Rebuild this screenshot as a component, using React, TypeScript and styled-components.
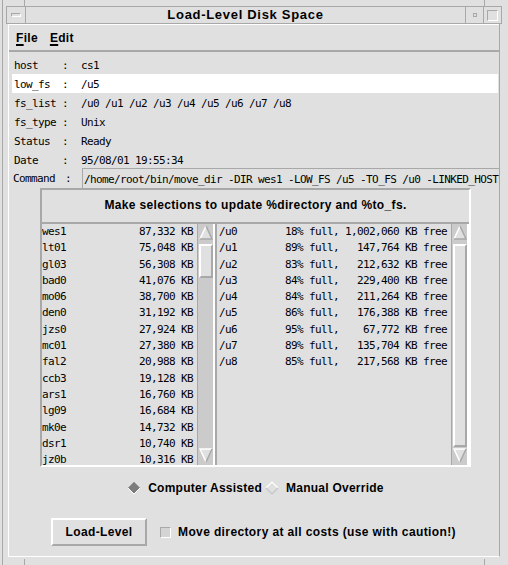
import React from 'react';
import styled, { createGlobalStyle } from 'styled-components';

const BG = '#e0e0e0';
const DARK = '#a8a8a8';
const LIGHT = '#ffffff';
const TROUGH = '#cbcbcb';
const TEXT = '#000000';
const MONO = `"DejaVu Sans Mono", monospace`;
const SANS = `"Liberation Sans", Arial, sans-serif`;

const Global = createGlobalStyle`
  html, body { margin: 0; padding: 0; background: ${BG}; }
  body { width: 508px; height: 565px; overflow: hidden; }
  * { box-sizing: border-box; }
`;

const Frame = styled.div`
  position: relative;
  width: 508px;
  height: 565px;
  background: ${BG};
  padding: 6px 6px 0 6px;
  display: flex;
  flex-direction: column;
`;

const OuterLine = styled.div<{ $side: 'left' | 'right' | 'bottom' }>`
  position: absolute;
  background: ${DARK};
  ${p => p.$side === 'left' && 'left: 2px; top: 0; bottom: 0; width: 1px;'}
  ${p => p.$side === 'right' && 'right: 2px; top: 0; bottom: 0; width: 1px;'}
  ${p => p.$side === 'bottom' && 'left: 0; right: 0; bottom: 3px; height: 1px;'}
`;

const Tick = styled.div<{ $x?: number; $y?: number; $v?: boolean; $bottom?: boolean }>`
  position: absolute;
  background: ${DARK};
  ${p => (p.$v ? 'width: 1px; height: 6px;' : 'height: 1px; width: 6px;')}
  ${p => (p.$x !== undefined ? `left: ${p.$x}px;` : '')}
  ${p => (p.$y !== undefined ? `top: ${p.$y}px;` : '')}
  ${p => (p.$bottom ? 'bottom: 0;' : '')}
`;

const TitleBar = styled.div`
  display: flex;
  height: 18px;
  border: 1px solid ${DARK};
`;

const TBBox = styled.div<{ $w: number }>`
  width: ${p => p.$w}px;
  flex: none;
  display: flex;
  align-items: center;
  justify-content: center;
  border-right: 1px solid ${DARK};
  &:last-child { border-right: none; }
`;

const MenuGlyph = styled.div`
  width: 10px;
  height: 4px;
  border: 1px solid ${DARK};
  border-bottom-color: ${LIGHT};
  border-right-color: ${LIGHT};
`;

const MinGlyph = styled.div`
  width: 4px;
  height: 4px;
  border: 1px solid ${DARK};
`;

const MaxGlyph = styled.div`
  width: 11px;
  height: 11px;
  border: 1px solid ${DARK};
  border-bottom-color: ${LIGHT};
  border-right-color: ${LIGHT};
`;

const TitleText = styled.div`
  flex: 1;
  text-align: center;
  font: bold 13px ${SANS};
  letter-spacing: 0.7px;
  color: ${TEXT};
  line-height: 16px;
  border-right: 1px solid ${DARK};
`;

const Client = styled.div`
  flex: 1;
  margin: 0 2px 9px 2px;
  border-left: 1px solid ${LIGHT};
  border-right: 1px solid ${DARK};
  border-bottom: 1px solid ${LIGHT};
  display: flex;
  flex-direction: column;
`;

const MenuBar = styled.div`
  height: 28px;
  display: flex;
  align-items: center;
  gap: 12px;
  padding-left: 7px;
  border-top: 1px solid ${LIGHT};
  border-bottom: 2px solid ${DARK};
`;

const MenuItem = styled.span`
  font: bold 12px ${SANS};
  letter-spacing: 0.3px;
  color: ${TEXT};
  padding-top: 1px;
  & u { text-decoration-thickness: 2px; text-underline-offset: 2px; }
`;

const Form = styled.div`
  display: flex;
  flex-direction: column;
  padding: 3px 0 0 3px;
`;

const FieldRow = styled.div<{ $hl?: boolean }>`
  display: flex;
  height: 19px;
  align-items: center;
  padding-top: 1px;
  background: ${p => (p.$hl ? LIGHT : 'transparent')};
  margin-right: 1px;
  font: 11px ${MONO};
  letter-spacing: -0.62px;
  color: ${TEXT};
  white-space: pre;
`;

const Label = styled.span`
  width: 50px;
  padding-left: 2px;
  flex: none;
`;

const Colon = styled.span`
  width: 19px;
  flex: none;
`;

const CommandRow = styled.div`
  display: flex;
  align-items: center;
  height: 20px;
  margin-top: -1px;
  padding-left: 4px;
  font: 11px ${MONO};
  letter-spacing: -0.62px;
  color: ${TEXT};
  white-space: pre;
`;

const CmdLabel = styled.span`
  width: 52px;
  flex: none;
`;

const CmdColon = styled.span`
  width: 17px;
  flex: none;
`;

const CmdField = styled.div`
  flex: 1;
  height: 20px;
  display: flex;
  align-items: center;
  padding: 1px 0 0 1px;
  overflow: hidden;
  border-left: 1px solid ${DARK};
  border-top: 1px solid ${DARK};
`;

const Panel = styled.div`
  margin: 0 0 0 31px;
  width: 431px;
  height: 279px;
  border-left: 2px solid ${DARK};
  border-top: 2px solid ${DARK};
  border-right: 2px solid ${LIGHT};
  border-bottom: 2px solid ${LIGHT};
  display: flex;
  flex-direction: column;
`;

const PanelHeader = styled.div`
  height: 32px;
  display: flex;
  align-items: center;
  justify-content: center;
  font: bold 12px ${SANS};
  letter-spacing: 0.35px;
  color: ${TEXT};
  padding-bottom: 2px;
`;

const Lists = styled.div`
  flex: 1;
  display: flex;
  border-top: 2px solid ${DARK};
  min-height: 0;
`;

const ListBox = styled.div<{ $w?: number }>`
  ${p => (p.$w ? `width: ${p.$w}px; flex: none;` : 'flex: 1;')}
  overflow: hidden;
  padding: 0 4px 0 ${p => (p.$w ? 0 : 2)}px;
  font: 11px ${MONO};
  letter-spacing: -0.62px;
  color: ${TEXT};
  white-space: pre;
`;

const LeftRow = styled.div`
  display: flex;
  justify-content: space-between;
  height: 16.3px;
  line-height: 15px;
`;

const RightRow = styled.div`
  height: 16.3px;
  line-height: 15px;
`;

const Divider = styled.div`
  width: 2px;
  flex: none;
  background: ${DARK};
`;

const ScrollBar = styled.div`
  width: 18px;
  flex: none;
  display: flex;
  flex-direction: column;
  background: ${TROUGH};
  border-left: 1px solid ${DARK};
  border-right: 2px solid ${LIGHT};
  padding: 1px 0 2px 1px;
`;

const Arrow = styled.svg`
  display: block;
  flex: none;
  width: 14px;
  height: 15px;
`;

const Thumb = styled.div<{ $grow?: boolean }>`
  margin-top: 4px;
  width: 14px;
  ${p => (p.$grow ? 'flex: 1; margin-bottom: 1px;' : 'height: 34px;')}
  background: ${BG};
  border-left: 2px solid ${LIGHT};
  border-top: 2px solid ${LIGHT};
  border-right: 2px solid ${DARK};
  border-bottom: 2px solid ${DARK};
`;

const Spacer = styled.div`
  flex: 1;
`;

const RadioRow = styled.div`
  display: flex;
  justify-content: center;
  align-items: center;
  height: 41px;
  padding-left: 3px;
  gap: 3px;
`;

const RadioItem = styled.label`
  display: flex;
  align-items: center;
  gap: 7px;
  font: bold 12px ${SANS};
  letter-spacing: 0.25px;
  color: ${TEXT};
`;

const Diamond = styled.svg`
  width: 14px;
  height: 14px;
  display: block;
`;

const BottomRow = styled.div`
  display: flex;
  align-items: center;
  padding-left: 42px;
  height: 48px;
`;

const PushButton = styled.button`
  width: 96px;
  height: 28px;
  background: ${BG};
  border-left: 2px solid ${LIGHT};
  border-top: 2px solid ${LIGHT};
  border-right: 2px solid ${DARK};
  border-bottom: 2px solid ${DARK};
  font: bold 12px ${SANS};
  letter-spacing: 0.35px;
  color: ${TEXT};
  padding: 0;
  margin-right: 13px;
`;

const CheckRow = styled.label`
  display: flex;
  align-items: center;
  gap: 7px;
  font: bold 12px ${SANS};
  letter-spacing: 0.38px;
  color: ${TEXT};
`;

const CheckBox = styled.span`
  width: 11px;
  height: 11px;
  background: #d4d4d4;
  border-left: 1px solid ${DARK};
  border-top: 1px solid ${DARK};
  border-right: 1px solid ${LIGHT};
  border-bottom: 1px solid ${LIGHT};
`;

const UpArrow = () => (
  <Arrow viewBox="0 0 14 15">
    <polygon points="7,1 13,14 1,14" fill={BG} />
    <polyline points="1,14 7,1" stroke={LIGHT} strokeWidth="1.5" fill="none" />
    <polyline points="7,1 13,14 1,14" stroke={DARK} strokeWidth="1.5" fill="none" />
  </Arrow>
);

const DownArrow = () => (
  <Arrow viewBox="0 0 14 15">
    <polygon points="1,1 13,1 7,14" fill={BG} />
    <polyline points="7,14 1,1 13,1" stroke={LIGHT} strokeWidth="1.5" fill="none" />
    <polyline points="13,1 7,14" stroke={DARK} strokeWidth="1.5" fill="none" />
  </Arrow>
);

const RadioOn = () => (
  <Diamond viewBox="0 0 14 14">
    <polygon points="7,1 13,7 7,13 1,7" fill="#7c7c7c" />
    <polyline points="1,7 7,1 13,7" stroke="#9a9a9a" strokeWidth="1" fill="none" />
    <polyline points="1,7 7,13 13,7" stroke={LIGHT} strokeWidth="1" fill="none" />
  </Diamond>
);

const RadioOff = () => (
  <Diamond viewBox="0 0 14 14">
    <polygon points="7,1 13,7 7,13 1,7" fill={BG} />
    <polyline points="1,7 7,1 13,7" stroke={LIGHT} strokeWidth="1.2" fill="none" />
    <polyline points="1,7 7,13 13,7" stroke="#c4c4c4" strokeWidth="1.2" fill="none" />
  </Diamond>
);

const fields: [string, string][] = [
  ['host', 'cs1'],
  ['low_fs', '/u5'],
  ['fs_list', '/u0 /u1 /u2 /u3 /u4 /u5 /u6 /u7 /u8'],
  ['fs_type', 'Unix'],
  ['Status', 'Ready'],
  ['Date', '95/08/01 19:55:34'],
];

const dirs: [string, string][] = [
  ['wes1', '87,332'],
  ['lt01', '75,048'],
  ['gl03', '56,308'],
  ['bad0', '41,076'],
  ['mo06', '38,700'],
  ['den0', '31,192'],
  ['jzs0', '27,924'],
  ['mc01', '27,380'],
  ['fal2', '20,988'],
  ['ccb3', '19,128'],
  ['ars1', '16,760'],
  ['lg09', '16,684'],
  ['mk0e', '14,732'],
  ['dsr1', '10,740'],
  ['jz0b', '10,316'],
];

const fss: [string, string, string][] = [
  ['/u0', '18%', '1,002,060'],
  ['/u1', '89%', '147,764'],
  ['/u2', '83%', '212,632'],
  ['/u3', '84%', '229,400'],
  ['/u4', '84%', '211,264'],
  ['/u5', '86%', '176,388'],
  ['/u6', '95%', '67,772'],
  ['/u7', '89%', '135,704'],
  ['/u8', '85%', '217,568'],
];

export default function App() {
  return (
    <>
      <Global />
      <Frame>
        <OuterLine $side="left" />
        <Tick $v $x={24} $y={0} />
        <Tick $v $x={484} $y={0} />
        <Tick $v $x={24} $bottom />
        <Tick $v $x={484} $bottom />
        <TitleBar>
          <TBBox $w={19}>
            <MenuGlyph />
          </TBBox>
          <TitleText>Load-Level Disk Space</TitleText>
          <TBBox $w={18}>
            <MinGlyph />
          </TBBox>
          <TBBox $w={17}>
            <MaxGlyph />
          </TBBox>
        </TitleBar>
        <Client>
          <MenuBar>
            <MenuItem>
              <u>F</u>ile
            </MenuItem>
            <MenuItem>
              <u>E</u>dit
            </MenuItem>
          </MenuBar>
          <Form>
            {fields.map(([k, v]) => (
              <FieldRow key={k} $hl={k === 'low_fs'}>
                <Label>{k}</Label>
                <Colon>:</Colon>
                <span>{v}</span>
              </FieldRow>
            ))}
          </Form>
          <CommandRow>
            <CmdLabel>Command</CmdLabel>
            <CmdColon>:</CmdColon>
            <CmdField>/home/root/bin/move_dir -DIR wes1 -LOW_FS /u5 -TO_FS /u0 -LINKED_HOSTS</CmdField>
          </CommandRow>
          <Panel>
            <PanelHeader>Make selections to update %directory and %to_fs.</PanelHeader>
            <Lists>
              <ListBox $w={155}>
                {dirs.map(([n, s]) => (
                  <LeftRow key={n}>
                    <span>{n}</span>
                    <span>{s} KB</span>
                  </LeftRow>
                ))}
              </ListBox>
              <ScrollBar>
                <UpArrow />
                <Thumb />
                <Spacer />
                <DownArrow />
              </ScrollBar>
              <Divider />
              <ListBox>
                {fss.map(([f, p, k]) => (
                  <RightRow key={f}>{`${f.padEnd(11)}${p} full, ${k.padStart(9)} KB free`}</RightRow>
                ))}
              </ListBox>
              <ScrollBar>
                <UpArrow />
                <Thumb $grow />
                <DownArrow />
              </ScrollBar>
            </Lists>
          </Panel>
          <RadioRow>
            <RadioItem>
              <RadioOn />
              Computer Assisted
            </RadioItem>
            <RadioItem>
              <RadioOff />
              Manual Override
            </RadioItem>
          </RadioRow>
          <BottomRow>
            <PushButton>Load-Level</PushButton>
            <CheckRow>
              <CheckBox />
              Move directory at all costs (use with caution!)
            </CheckRow>
          </BottomRow>
        </Client>
      </Frame>
    </>
  );
}
